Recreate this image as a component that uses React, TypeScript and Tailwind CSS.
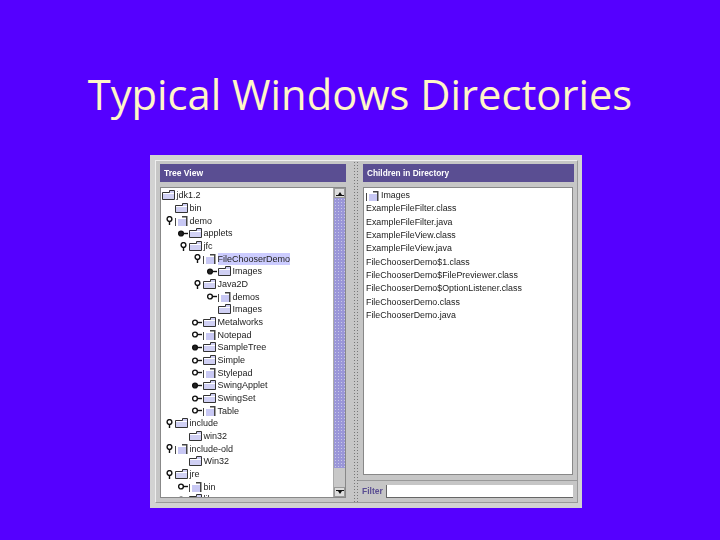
const tree: [number, string, string, string][] = [
  // level, handle (o = open, c = closed, d = closed dark, '' = none), folder (f = full, g = gap), label
  [0, '', 'f', 'jdk1.2'],
  [1, '', 'f', 'bin'],
  [1, 'o', 'g', 'demo'],
  [2, 'd', 'f', 'applets'],
  [2, 'o', 'f', 'jfc'],
  [3, 'o', 'g', 'FileChooserDemo'],
  [4, 'd', 'f', 'Images'],
  [3, 'o', 'f', 'Java2D'],
  [4, 'c', 'g', 'demos'],
  [4, '', 'f', 'Images'],
  [3, 'c', 'f', 'Metalworks'],
  [3, 'c', 'g', 'Notepad'],
  [3, 'd', 'f', 'SampleTree'],
  [3, 'c', 'f', 'Simple'],
  [3, 'c', 'g', 'Stylepad'],
  [3, 'd', 'f', 'SwingApplet'],
  [3, 'c', 'f', 'SwingSet'],
  [3, 'c', 'g', 'Table'],
  [1, 'o', 'f', 'include'],
  [2, '', 'f', 'win32'],
  [1, 'o', 'g', 'include-old'],
  [2, '', 'f', 'Win32'],
  [1, 'o', 'f', 'jre'],
  [2, 'c', 'g', 'bin'],
  [2, 'c', 'f', 'lib'],
];

const files = [
  'ExampleFileFilter.class',
  'ExampleFileFilter.java',
  'ExampleFileView.class',
  'ExampleFileView.java',
  'FileChooserDemo$1.class',
  'FileChooserDemo$FilePreviewer.class',
  'FileChooserDemo$OptionListener.class',
  'FileChooserDemo.class',
  'FileChooserDemo.java',
];

function Folder({ kind }: { kind: string }) {
  if (kind === 'g') {
    return (
      <svg width="13" height="10" viewBox="0 0 13 10" className="shrink-0">
        <rect x="0" y="2" width="1" height="8" fill="#444" />
        <rect x="3" y="3" width="8" height="7" fill="#c8c8f4" />
        <rect x="7" y="0" width="5" height="1.5" fill="#444" />
        <rect x="11" y="0" width="1.5" height="10" fill="#444" />
      </svg>
    );
  }
  return (
    <svg width="13" height="10" viewBox="0 0 13 10" className="shrink-0">
      <path d="M0.5 2.5H7.5V0.5H12.5V9.5H0.5Z" fill="#d0d0f4" stroke="#333" strokeWidth="1" />
      <path d="M1 3.5H12" stroke="#fff" strokeWidth="1" />
    </svg>
  );
}

function Handle({ kind }: { kind: string }) {
  const fill = kind === 'd' ? '#222' : '#fff';
  if (kind === 'o') {
    return (
      <svg width="7" height="9" viewBox="0 0 7 9" className="shrink-0">
        <circle cx="3.5" cy="3" r="2.4" fill={fill} stroke="#111" strokeWidth="1.4" />
        <path d="M3.5 5V9" stroke="#111" strokeWidth="1.4" />
      </svg>
    );
  }
  return (
    <svg width="10" height="7" viewBox="0 0 10 7" className="shrink-0">
      <circle cx="3" cy="3.5" r="2.4" fill={fill} stroke="#111" strokeWidth="1.4" />
      <path d="M5 3.5H10" stroke="#111" strokeWidth="1.4" />
    </svg>
  );
}

function TreeRow({ level, handle, folder, label }: { level: number; handle: string; folder: string; label: string }) {
  const left = [1, 14, 28, 42, 57][level];
  return (
    <div className="relative flex h-[12.68px] items-center gap-[1.5px]" style={{ paddingLeft: left }}>
      {handle && (
        <span className="absolute flex w-[10px] justify-center" style={{ left: left - 11 }}>
          <Handle kind={handle} />
        </span>
      )}
      <Folder kind={folder} />
      <span className={label === 'FileChooserDemo' ? 'bg-[#ccccff] leading-[12px]' : 'leading-[12px]'}>{label}</span>
    </div>
  );
}

function ScrollArrow({ down }: { down?: boolean }) {
  return (
    <div className="flex h-[10px] shrink-0 items-center justify-center border border-[#999] bg-[#ddd]">
      <svg width="8" height="5" viewBox="0 0 8 5">
        {down ? <path d="M0 0H8V1H6L4 4 2 1H0Z" fill="#111" /> : <path d="M0 5H8V4H6L4 1 2 4H0Z" fill="#111" />}
      </svg>
    </div>
  );
}

export default function App() {
  return (
    <div className="flex h-[540px] w-[720px] flex-col items-center overflow-hidden bg-[#5500ff] font-['Liberation_Sans',sans-serif]">
      <h1 className="mt-[64px] h-[60px] whitespace-nowrap font-['Open_Sans',sans-serif] text-[41.7px] leading-[60px] font-normal text-[#fff6c8]">
        Typical Windows Directories
      </h1>

      <div className="mt-[31px] ml-[12px] h-[353px] w-[432px] bg-[#d2d2d2] pt-[5px] pr-[4px] pb-[5px] pl-[5px] text-[9px] text-[#222] blur-[0.35px]">
        <div className="flex h-full border border-t-[#eee] border-r-[#999] border-b-[#999] border-l-[#eee] bg-[#c6c6c6]">
          {/* left pane */}
          <div className="flex w-[197px] shrink-0 flex-col pt-[3px] pl-[4px] pr-[7px]">
            <div className="flex h-[18px] shrink-0 items-center bg-[#5a4e92] px-[4px] text-[8.5px] font-bold text-white">Tree View</div>
            <div className="mt-[5px] flex h-[311px] border border-[#888] bg-white">
              <div className="flex-1 overflow-hidden pt-[1px]">
                {tree.map(([level, handle, folder, label], i) => (
                  <TreeRow key={i} level={level} handle={handle} folder={folder} label={label} />
                ))}
              </div>
              <div className="flex w-[12px] shrink-0 flex-col border-l border-[#aaa] bg-[#c8c8c8]">
                <ScrollArrow />
                <div className="h-[270px] bg-[#9a96d8] bg-[radial-gradient(#c8c8e8_0.6px,transparent_0.6px)] bg-[length:3px_3px]" />
                <div className="flex-1" />
                <ScrollArrow down />
              </div>
            </div>
          </div>

          {/* splitter */}
          <div className="w-[5px] shrink-0 bg-[radial-gradient(#777_0.6px,transparent_0.7px)] bg-[length:3px_3px]" />

          {/* right pane */}
          <div className="flex flex-1 flex-col pt-[3px] pl-[5px]">
            <div className="mr-[3px] flex h-[18px] shrink-0 items-center bg-[#5a4e92] px-[4px] text-[8.3px] font-bold text-white">Children in Directory</div>
            <div className="mt-[5px] mr-[4px] h-[288px] border border-[#888] bg-white pl-[2px] pt-[1px] text-[8.85px]">
              <div className="flex h-[13.3px] items-center gap-[2px]">
                <Folder kind="g" />
                <span>Images</span>
              </div>
              {files.map((f) => (
                <div key={f} className="flex h-[13.35px] items-center">{f}</div>
              ))}
            </div>
            <div className="-ml-[5px] mt-[5px] flex h-[22px] items-center border-t border-[#999] pl-[4px] pr-[4px]">
              <span className="w-[24px] shrink-0 text-[8.5px] font-bold text-[#5a4e92]">Filter</span>
              <div className="h-[13px] flex-1 border-b border-l border-[#666] bg-white" />
            </div>
          </div>
        </div>
      </div>
    </div>
  );
}
